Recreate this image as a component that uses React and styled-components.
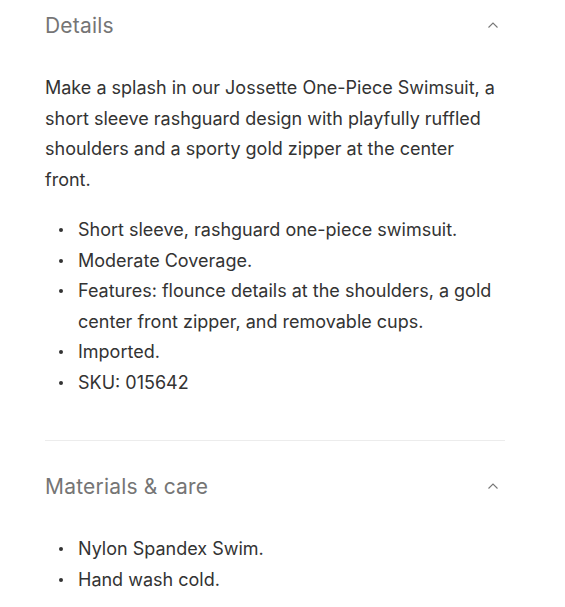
import React from "react";
import styled, { createGlobalStyle } from "styled-components";

const GlobalStyle = createGlobalStyle`
  html, body {
    margin: 0;
    padding: 0;
    background: #fff;
  }
  body {
    font-family: Inter, "Liberation Sans", sans-serif;
    color: #333;
    -webkit-font-smoothing: antialiased;
  }
`;

const Page = styled.div`
  padding: 10px 0 0 45px;
  width: 460px;
`;

const Section = styled.section`
  border-bottom: ${({ last }) => (last ? "none" : "1px solid #ececec")};
  padding-bottom: ${({ last }) => (last ? "0" : "42px")};
  padding-top: ${({ first }) => (first ? "0" : "30px")};
`;

const Header = styled.div`
  display: flex;
  align-items: center;
  justify-content: space-between;
  height: 30px;
  padding-right: 6px;
`;

const Title = styled.h3`
  margin: 0;
  font-size: 21px;
  font-weight: 400;
  color: #757575;
  letter-spacing: 0.2px;
`;

const Body = styled.div`
  padding-top: 33px;
  font-size: 18px;
  line-height: 30.5px;
  color: #333;
`;

const Paragraph = styled.p`
  margin: 0 0 20px;
  max-width: 452px;
`;

const List = styled.ul`
  margin: 0;
  padding: 0;
  list-style: none;
`;

const Item = styled.li`
  position: relative;
  padding-left: 33px;

  &::before {
    content: "";
    position: absolute;
    left: 14px;
    top: 13px;
    width: 4px;
    height: 4px;
    border-radius: 50%;
    background: #333;
  }
`;

const Caret = () => (
  <svg width="12" height="8" viewBox="0 0 12 8" fill="none">
    <polyline points="1.5,6.5 6,2 10.5,6.5" stroke="#777" strokeWidth="1.1" />
  </svg>
);

const details = [
  "Short sleeve, rashguard one-piece swimsuit.",
  "Moderate Coverage.",
  "Features: flounce details at the shoulders, a gold center front zipper, and removable cups.",
  "Imported.",
  "SKU: 015642",
];

const care = ["Nylon Spandex Swim.", "Hand wash cold."];

export default function App() {
  return (
    <>
      <GlobalStyle />
      <Page>
        <Section first>
          <Header>
            <Title>Details</Title>
            <Caret />
          </Header>
          <Body>
            <Paragraph>
              Make a splash in our Jossette One-Piece Swimsuit, a short sleeve
              rashguard design with playfully ruffled shoulders and a sporty gold
              zipper at the center front.
            </Paragraph>
            <List>
              {details.map((d) => (
                <Item key={d}>{d}</Item>
              ))}
            </List>
          </Body>
        </Section>
        <Section last>
          <Header>
            <Title>Materials &amp; care</Title>
            <Caret />
          </Header>
          <Body>
            <List>
              {care.map((d) => (
                <Item key={d}>{d}</Item>
              ))}
            </List>
          </Body>
        </Section>
      </Page>
    </>
  );
}
